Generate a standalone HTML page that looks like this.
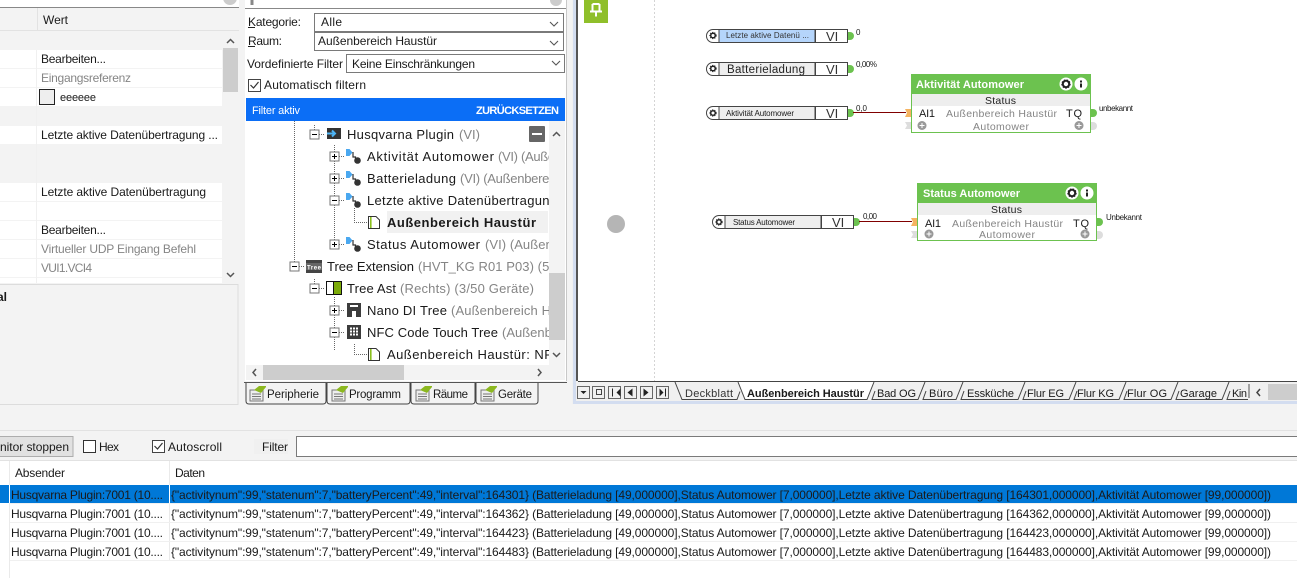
<!DOCTYPE html>
<html><head><meta charset="utf-8"><title>Monitor</title>
<style>
html,body{margin:0;padding:0;width:1297px;height:578px;overflow:hidden;background:#f3f3f3}
svg{display:block;font-family:"Liberation Sans",sans-serif;font-size:12px;fill:#1a1a1a}
.g{fill:#858585}.t{font-size:13px}.s{font-size:8px}
.b{font-weight:bold}
</style></head><body>
<svg width="1297" height="578" viewBox="0 0 1297 578" xmlns="http://www.w3.org/2000/svg">
<defs>
<clipPath id="tc"><rect x="246" y="121" width="303" height="244"/></clipPath>
<clipPath id="lc"><rect x="0" y="285" width="20" height="30"/></clipPath>
<g id="chev"><path d="M-4 -2L0 2L4 -2" fill="none" stroke="#555" stroke-width="1.1"/></g>
<g id="plus"><rect x="-4.5" y="-4.5" width="9" height="9" fill="#fff" stroke="#777"/><path d="M-2.5 0H2.5M0 -2.5V2.5" stroke="#000"/></g>
<g id="minus"><rect x="-4.5" y="-4.5" width="9" height="9" fill="#fff" stroke="#777"/><path d="M-2.5 0H2.5" stroke="#000"/></g>
<g id="vi"><path d="M0 0h3.500l3 3.500-3 3.500H0z" fill="#4aa8f0"/><path d="M7 3v5h2.500v3" fill="none" stroke="#333" stroke-width="1.200"/><circle cx="11.500" cy="11.500" r="3.300" fill="#333"/></g>
<g id="doc"><path d="M.5 .5H8l3.500 3.500V12.500H.5z" fill="#fff" stroke="#333"/><rect x="2" y="1" width="1.600" height="11" fill="#8cc020"/></g>
<g id="tab"><path d="M0 4H13V15H0z" fill="#eee" stroke="#777"/><path d="M2 8h9M2 10.500h9M2 13h9" stroke="#777"/><path d="M4 4L9 0h7v1l-5 6z" fill="#8cb820"/></g>
<g id="gear"><circle r="6.500" fill="#fff"/><circle r="3.200" fill="none" stroke="#222" stroke-width="2"/><circle r="4.200" fill="none" stroke="#222" stroke-width="1" stroke-dasharray="1.500 1.400"/></g>
<g id="info"><circle r="6.500" fill="#fff"/><rect x="-1" y="-3.500" width="2" height="2" fill="#222"/><rect x="-1" y="-.5" width="2" height="4" fill="#222"/></g>
<g id="pl"><circle r="4.500" fill="#999"/><path d="M-2.500 0H2.500M0 -2.500V2.500" stroke="#fff"/></g>
<g id="smg"><circle r="2.300" fill="none" stroke="#222" stroke-width="1.500"/><circle r="3.200" fill="none" stroke="#222" stroke-width=".9" stroke-dasharray="1.200 1.100"/></g>
<path id="outg" d="M0 -4h2a4 4 0 0 1 0 8h-2z" fill="#6cc24f"/>
<path id="outd" d="M0 -4h2a4 4 0 0 1 0 8h-2z" fill="#ddd"/>
</defs>

<rect width="1297" height="578" fill="#f3f3f3"/>

<!-- LEFT PANEL -->
<rect x="0" y="0" width="239" height="7" fill="#fff"/>
<rect x="0" y="7" width="239" height="1" fill="#888"/>
<circle cx="230" cy="-2" r="7" fill="#ccc"/>
<rect x="0" y="30" width="239" height="1" fill="#e2e2e2"/>
<rect x="37" y="8" width="1" height="22" fill="#e2e2e2"/>
<text x="43" y="24" textLength="25">Wert</text>
<rect x="0" y="50" width="222" height="18" fill="#fff"/>
<rect x="0" y="69" width="222" height="18" fill="#fff"/>
<rect x="0" y="88" width="222" height="18" fill="#fff"/>
<rect x="0" y="126" width="222" height="18" fill="#fff"/>
<rect x="0" y="183" width="222" height="18" fill="#fff"/>
<rect x="0" y="202" width="222" height="18" fill="#fff"/>
<rect x="0" y="221" width="222" height="18" fill="#fff"/>
<rect x="0" y="240" width="222" height="18" fill="#fff"/>
<rect x="0" y="259" width="222" height="18" fill="#fff"/>
<rect x="0" y="278" width="222" height="5" fill="#fff"/>
<rect x="36" y="50" width="1" height="233" fill="#f0f0f0"/>
<text x="41" y="63" textLength="65">Bearbeiten...</text>
<text x="41" y="82" textLength="90" class="g">Eingangsreferenz</text>
<rect x="39.500" y="89.500" width="15" height="15" fill="#eee" stroke="#222"/>
<text x="60" y="101" font-size="11" textLength="36">eeeeee</text>
<text x="41" y="139" textLength="177">Letzte aktive Datenübertragung ...</text>
<text x="41" y="196" textLength="165">Letzte aktive Datenübertragung</text>
<text x="41" y="234" textLength="65">Bearbeiten...</text>
<text x="41" y="253" textLength="155" class="g">Virtueller UDP Eingang Befehl</text>
<text x="41" y="272" textLength="51" class="g">VUI1.VCI4</text>
<rect x="223" y="48" width="15" height="44" fill="#cdcdcd"/>
<path d="M227 43l3.500-3.500L234 43" fill="none" stroke="#555" stroke-width="1.500"/>
<path d="M227 273l3.500 3.500L234 273" fill="none" stroke="#555" stroke-width="1.500"/>
<rect x="-1" y="284.500" width="239" height="120" fill="#f3f3f3" stroke="#dcdcdc"/>
<text x="-3" y="301" class="b">al</text>

<!-- CENTER PANEL -->
<rect x="245" y="0" width="322" height="381" fill="#fff"/>
<rect x="245" y="8" width="322" height="1" fill="#888"/>
<circle cx="556" cy="0" r="6" fill="#ccc"/>
<path d="M252 0v5" stroke="#888" stroke-width="3"/>
<rect x="566" y="0" width="1" height="382" fill="#c8c8c8"/>
<text x="248" y="26" textLength="53">Kategorie:</text><path d="M248 27.500h7" stroke="#222"/>
<text x="248" y="45" textLength="34">Raum:</text><path d="M248 46.500h7" stroke="#222"/>
<rect x="314.500" y="13.500" width="249" height="18" fill="#fff" stroke="#7a7a7a"/>
<rect x="314.500" y="32.500" width="249" height="18" fill="#fff" stroke="#7a7a7a"/>
<text x="321" y="26" textLength="21">Alle</text>
<text x="318" y="45" textLength="119">Außenbereich Haustür</text>
<use href="#chev" x="554" y="24"/><use href="#chev" x="554" y="43"/>
<text x="247" y="68" textLength="96">Vordefinierte Filter</text>
<rect x="346.500" y="54.500" width="218" height="18" fill="#fff" stroke="#7a7a7a"/>
<text x="352" y="68" textLength="123">Keine Einschränkungen</text>
<use href="#chev" x="556" y="63"/>
<rect x="248.500" y="79.500" width="12" height="12" fill="#fff" stroke="#444"/>
<path d="M250.500 85l3 3 5-6" fill="none" stroke="#333" stroke-width="1.200"/>
<text x="264" y="89" textLength="102">Automatisch filtern</text>
<rect x="246" y="98" width="319" height="23" fill="#0b6ef6"/>
<text x="252" y="114" font-size="11" style="fill:#fff" textLength="48">Filter aktiv</text>
<text x="476" y="114" font-size="11" class="b" style="fill:#fff" textLength="83">ZURÜCKSETZEN</text>

<!-- tree lines -->
<g stroke="#666" stroke-dasharray="1 1" fill="none">
<path d="M294.500 121V262M314.500 125V130M314.500 279V284M334.500 145V240M334.500 297V350M354.500 208V222.500H367M354.500 344V354.500H367"/>
<path d="M319 134.500h6M339 156.500h6M339 178.500h6M339 200.500h6M339 244.500h6M299 266.500h6M319 288.500h5M339 310.500h6M339 332.500h6"/>
</g>
<use href="#minus" x="314.500" y="134.500"/>
<rect x="327" y="128" width="14" height="11" fill="#333"/><path d="M327 133.500h8M332 130.500l3 3-3 3" fill="none" stroke="#4db4f5" stroke-width="2"/>
<use href="#plus" x="334.500" y="156.500"/><use href="#vi" x="346" y="149"/>
<use href="#plus" x="334.500" y="178.500"/><use href="#vi" x="346" y="171"/>
<use href="#minus" x="334.500" y="200.500"/><use href="#vi" x="346" y="193"/>
<use href="#doc" x="368" y="216"/>
<use href="#plus" x="334.500" y="244.500"/><use href="#vi" x="346" y="237"/>
<use href="#minus" x="294.500" y="266.500"/>
<rect x="306" y="260" width="16" height="13" fill="#444"/><rect x="306" y="263" width="16" height="7" fill="#666"/><text x="307" y="269.500" font-size="6" class="b" style="fill:#fff" textLength="14">Tree</text>
<use href="#minus" x="314.500" y="288.500"/>
<rect x="326.500" y="281.500" width="15" height="13" fill="#fff" stroke="#111"/><rect x="334" y="282" width="7" height="12" fill="#7cab0a"/><path d="M333.500 282v12" stroke="#111"/>
<use href="#plus" x="334.500" y="310.500"/>
<path d="M347 303h14v14h-5v-6h-4v6h-5z" fill="#3c3c3c"/><rect x="350" y="305" width="8" height="2" fill="#fff"/>
<use href="#minus" x="334.500" y="332.500"/>
<rect x="347" y="325" width="14" height="14" fill="#3c3c3c"/><path d="M350 328.500h8M350 331.500h8M350 334.500h8" stroke="#fff" stroke-width="2" stroke-dasharray="2 1"/>
<use href="#doc" x="368" y="348"/>
<rect x="387" y="211" width="161" height="22" fill="#f1f1f1"/>
<g clip-path="url(#tc)" class="t">
<text x="347" y="139" class="t" textLength="107">Husqvarna Plugin</text><text x="459" y="139" class="t g" textLength="21">(VI)</text>
<text x="367" y="161" class="t" textLength="127">Aktivität Automower</text><text x="498" y="161" class="t g" textLength="64">(VI) (Außen</text>
<text x="367" y="183" class="t" textLength="89">Batterieladung</text><text x="460" y="183" class="t g" textLength="92">(VI) (Außenberei</text>
<text x="367" y="205" class="t" textLength="190">Letzte aktive Datenübertragung</text>
<text x="387" y="227" class="t b" textLength="149">Außenbereich Haustür</text>
<text x="367" y="249" class="t" textLength="113">Status Automower</text><text x="485" y="249" class="t g" textLength="75">(VI) (Außenb</text>
<text x="327" y="271" class="t" textLength="87">Tree Extension</text><text x="418" y="271" class="t g" textLength="135">(HVT_KG R01 P03) (5/</text>
<text x="347" y="293" class="t" textLength="49">Tree Ast</text><text x="400" y="293" class="t g" textLength="134">(Rechts) (3/50 Geräte)</text>
<text x="367" y="315" class="t" textLength="80">Nano DI Tree</text><text x="451" y="315" class="t g" textLength="100">(Außenbereich H</text>
<text x="367" y="337" class="t" textLength="131">NFC Code Touch Tree</text><text x="502" y="337" class="t g">(Außenbereich</text>
<text x="387" y="359" class="t" textLength="175">Außenbereich Haustür: NFC</text>
</g>
<rect x="549" y="121" width="16" height="244" fill="#f3f3f3"/>
<rect x="549" y="273" width="16" height="67" fill="#cdcdcd"/>
<path d="M553 136l3.500-3.500L560 136" fill="none" stroke="#555" stroke-width="1.500"/>
<path d="M553 353l3.500 3.500L560 353" fill="none" stroke="#555" stroke-width="1.500"/>
<rect x="529" y="126" width="16" height="16" rx="1" fill="#666"/><rect x="532" y="133" width="10" height="2" fill="#fff"/>
<rect x="246" y="365" width="319" height="15" fill="#f3f3f3"/>
<rect x="263" y="365" width="141" height="15" fill="#cdcdcd"/>
<path d="M256 369l-3 3.500 3 3.500M538 369l3 3.500-3 3.500" fill="none" stroke="#555" stroke-width="1.500"/>

<!-- left tabs -->
<rect x="244" y="381" width="323" height="24" fill="#f3f3f3"/>
<path d="M244 382.500H567" stroke="#555"/>
<path d="M246 383V401q0 3 3 3H323q3 0 3-3V383" fill="#f3f3f3" stroke="#444"/>
<path d="M327 383V401q0 3 3 3H407q3 0 3-3V383" fill="#f3f3f3" stroke="#444"/>
<path d="M411 383V401q0 3 3 3H472q3 0 3-3V383" fill="#f3f3f3" stroke="#444"/>
<path d="M476 383V401q0 3 3 3H535q3 0 3-3V383" fill="#f3f3f3" stroke="#444"/>
<use href="#tab" x="250" y="386"/><use href="#tab" x="332" y="386"/><use href="#tab" x="416" y="386"/><use href="#tab" x="481" y="386"/>
<text x="267" y="398" font-size="11.500" textLength="52">Peripherie</text>
<text x="349" y="398" font-size="11.500" textLength="52">Programm</text>
<text x="433" y="398" font-size="11.500" textLength="35">Räume</text>
<text x="498" y="398" font-size="11.500" textLength="34">Geräte</text>

<!-- DESIGNER -->
<rect x="572" y="0" width="725" height="404" fill="#f0f0f0"/>
<rect x="573" y="0" width="3" height="403" fill="#d3ddf0"/>
<rect x="573" y="401" width="724" height="3" fill="#d3ddf0"/>
<rect x="576" y="0" width="2" height="381" fill="#555"/>
<rect x="578" y="0" width="719" height="381" fill="#fff"/>
<rect x="584" y="0" width="24" height="23" fill="#8fbf2a"/>
<path d="M592.500 4h7M592.500 4v7.500M599.500 4v7.500M590 11.500h12M596 11.500v5" fill="none" stroke="#fff" stroke-width="2"/>
<path d="M654.500 0V381" stroke="#d4d4d4" stroke-dasharray="2 2"/>
<circle cx="616" cy="224" r="9" fill="#b5b5b5"/>

<!-- VI blocks -->
<g>
<path d="M719 29.500h-6a6.500 6.500 0 0 0 0 13h6" fill="#fff" stroke="#444"/>
<rect x="719" y="29.500" width="96" height="13" fill="#b5d5fb" stroke="#444"/>
<rect x="815.500" y="29.500" width="32" height="13" fill="#fff" stroke="#444"/>
<use href="#smg" x="713" y="35.500"/>
<text x="726" y="38" class="s" fill="#333" textLength="83">Letzte aktive Datenü ...</text>
<text x="826" y="41" font-size="13" style="fill:#333">VI</text>
<use href="#outg" x="848" y="36"/>
<text x="856" y="35" class="s" textLength="4">0</text>
</g>
<g>
<path d="M719 62.500h-6a6.500 6.500 0 0 0 0 13h6" fill="#fff" stroke="#444"/>
<rect x="719" y="62.500" width="96" height="13" fill="#eee" stroke="#444"/>
<rect x="815.500" y="62.500" width="32" height="13" fill="#fff" stroke="#444"/>
<use href="#smg" x="713" y="68.500"/>
<text x="727" y="73" font-size="11.500" textLength="78" style="fill:#222">Batterieladung</text>
<text x="826" y="74" font-size="13" style="fill:#333">VI</text>
<use href="#outg" x="848" y="69"/>
<text x="856" y="67" class="s" textLength="21">0,00%</text>
</g>
<g>
<path d="M719 106.500h-6a6.500 6.500 0 0 0 0 13h6" fill="#fff" stroke="#444"/>
<rect x="719" y="106.500" width="96" height="13" fill="#eee" stroke="#444"/>
<rect x="815.500" y="106.500" width="32" height="13" fill="#fff" stroke="#444"/>
<use href="#smg" x="713" y="113"/>
<text x="726" y="116" class="s" textLength="68">Aktivität Automower</text>
<text x="826" y="118" font-size="13" style="fill:#333">VI</text>
<use href="#outg" x="848" y="113"/>
<text x="856" y="111" class="s" textLength="11">0,0</text>
<path d="M853 112.500H906" stroke="#800000"/>
</g>
<g>
<path d="M725 215.500h-6a6.500 6.500 0 0 0 0 13h6" fill="#fff" stroke="#444"/>
<rect x="725" y="215.500" width="96" height="13" fill="#eee" stroke="#444"/>
<rect x="821.500" y="215.500" width="32" height="13" fill="#fff" stroke="#444"/>
<use href="#smg" x="719" y="222"/>
<text x="733" y="225" class="s" textLength="62">Status Automower</text>
<text x="832" y="227" font-size="13" style="fill:#333">VI</text>
<use href="#outg" x="854" y="222"/>
<text x="863" y="219" class="s" textLength="14">0,00</text>
<path d="M859 221.500H912" stroke="#800000"/>
</g>

<!-- Function block 1 -->
<path d="M905 109h6v8h-6l2-4z" fill="#f5b461"/>
<path d="M905 122h6v7h-6l2-3.500z" fill="#ddd"/>
<rect x="911.500" y="74.500" width="179" height="58" fill="#fff" stroke="#6cc24f"/>
<rect x="911" y="74" width="180" height="20" fill="#6cc24f"/>
<rect x="912" y="94" width="178" height="12" fill="#eee"/>
<text x="916" y="88" class="b" font-size="11" style="fill:#fff" textLength="108">Aktivität Automower</text>
<use href="#gear" x="1066" y="84"/><use href="#info" x="1081" y="84"/>
<text x="985" y="104" font-size="10.500" textLength="31" fill="#222">Status</text>
<text x="919" y="117" font-size="11" textLength="16">AI1</text>
<text x="946" y="117" font-size="10.500" class="g" textLength="111">Außenbereich Haustür</text>
<text x="1066" y="117" font-size="11" textLength="16">TQ</text>
<text x="973" y="130" font-size="10.500" class="g" textLength="56">Automower</text>
<use href="#pl" x="922" y="125.500"/><use href="#pl" x="1079" y="125.500"/>
<use href="#outg" x="1091" y="113"/>
<use href="#outd" x="1091" y="126"/>
<text x="1099" y="111" class="s" textLength="34">unbekannt</text>

<!-- Function block 2 -->
<path d="M911 218h6v8h-6l2-4z" fill="#f5b461"/>
<path d="M911 231h6v7h-6l2-3.500z" fill="#ddd"/>
<rect x="917.500" y="183.500" width="179" height="57" fill="#fff" stroke="#6cc24f"/>
<rect x="917" y="183" width="180" height="20" fill="#6cc24f"/>
<rect x="918" y="203" width="178" height="12" fill="#eee"/>
<text x="923" y="197" class="b" font-size="11" style="fill:#fff" textLength="97">Status Automower</text>
<use href="#gear" x="1072" y="193"/><use href="#info" x="1087" y="193"/>
<text x="991" y="213" font-size="10.500" textLength="31" fill="#222">Status</text>
<text x="925" y="227" font-size="11" textLength="16">AI1</text>
<text x="952" y="227" font-size="10.500" class="g" textLength="111">Außenbereich Haustür</text>
<text x="1073" y="227" font-size="11" textLength="16">TQ</text>
<text x="979" y="238" font-size="10.500" class="g" textLength="56">Automower</text>
<use href="#pl" x="929" y="234"/><use href="#pl" x="1085" y="234"/>
<use href="#outg" x="1097" y="222"/>
<use href="#outd" x="1097" y="235"/>
<text x="1106" y="220" class="s" textLength="36">Unbekannt</text>

<!-- Designer tab bar -->
<rect x="578" y="381" width="719" height="20" fill="#f0f0f0"/>
<path d="M578 381.500H1297" stroke="#444"/>
<g fill="#f0f0f0" stroke="#666">
<rect x="577.500" y="386.500" width="12" height="12"/><rect x="592.500" y="386.500" width="12" height="12"/><rect x="608.500" y="386.500" width="12" height="12"/><rect x="624.500" y="386.500" width="12" height="12"/><rect x="640.500" y="386.500" width="12" height="12"/><rect x="656.500" y="386.500" width="12" height="12"/>
</g>
<path d="M580.500 391h6l-3 3zM627.500 392.500l5-4v8zM648.500 392.500l-5-4v8zM616.500 392.500l4-4v8zM659.500 388.500l4 4-4 4z" fill="#222"/>
<path d="M612.500 388.500v8M665.500 388.500v8" stroke="#222"/>
<rect x="596.500" y="389.500" width="5" height="5" fill="none" stroke="#444"/>
<path d="M738 382L745 399.500H867L874 382L737 382z" fill="#fff"/>
<path d="M675 382l7 17.500H737l3-8M738 382l7 17.500H867l7-17.500M875 391l-3 8.500H918L925 382M926 391l-3 8.500H956L963 382M964 391l-3 8.500H1018L1025 382M1026 391l-3 8.500H1069L1076 382M1077 391l-3 8.500H1119L1126 382M1127 391l-3 8.500H1171L1178 382M1179 391l-3 8.500H1222L1229 382M1230 391l-3 8.500H1248" fill="none" stroke="#444"/>
<g font-size="11">
<text x="685" y="397" textLength="48" fill="#333">Deckblatt</text>
<text x="747" y="397" textLength="117" class="b">Außenbereich Haustür</text>
<text x="877" y="397" textLength="39">Bad OG</text>
<text x="929" y="397" textLength="24">Büro</text>
<text x="967" y="397" textLength="47">Essküche</text>
<text x="1027" y="397" textLength="37">Flur EG</text>
<text x="1077" y="397" textLength="37">Flur KG</text>
<text x="1127" y="397" textLength="40">Flur OG</text>
<text x="1180" y="397" textLength="37">Garage</text>
<text x="1232" y="397" textLength="15">Kin</text>
</g>
<rect x="1249" y="382" width="48" height="19" fill="#f0f0f0"/>
<rect x="1268" y="384" width="29" height="16" fill="#cdcdcd"/>
<path d="M1249 384v14" stroke="#555"/>
<path d="M1260 389l-3 3.500 3 3.500" fill="none" stroke="#444" stroke-width="1.500"/>

<!-- MONITOR -->
<rect x="0" y="430" width="1297" height="1" fill="#e2e2e2"/>
<rect x="-2" y="436.500" width="75" height="20" fill="#e1e1e1" stroke="#adadad"/>
<text x="0" y="451" textLength="69">nitor stoppen</text>
<rect x="83.500" y="440.500" width="12" height="12" fill="#fff" stroke="#333"/>
<text x="99" y="451" textLength="20">Hex</text>
<rect x="152.500" y="440.500" width="12" height="12" fill="#fff" stroke="#444"/>
<path d="M154.500 446l3 3 5-6" fill="none" stroke="#333" stroke-width="1.200"/>
<text x="168" y="451" textLength="54">Autoscroll</text>
<rect x="254" y="439" width="34" height="15" fill="#f0f0f0"/>
<text x="262" y="451" textLength="26">Filter</text>
<rect x="296.500" y="436.500" width="1002" height="20" fill="#fff" stroke="#7a7a7a"/>
<rect x="0" y="460" width="1297" height="118" fill="#fff"/>
<rect x="0" y="460" width="1297" height="1" fill="#e2e2e2"/>
<rect x="9" y="461" width="1" height="117" fill="#eaeaea"/>
<rect x="169" y="461" width="1" height="100" fill="#eaeaea"/>
<text x="15" y="477" textLength="50">Absender</text>
<text x="175" y="477" textLength="30">Daten</text>
<rect x="0" y="485" width="1297" height="18" fill="#0078d7"/>
<rect x="10" y="503" width="1287" height="1" fill="#f0f0f0"/>
<rect x="10" y="522" width="1287" height="1" fill="#f0f0f0"/>
<rect x="10" y="541" width="1287" height="1" fill="#f0f0f0"/>
<rect x="10" y="560" width="1287" height="1" fill="#f0f0f0"/>
<rect x="9" y="485" width="1" height="18" fill="#fff"/><rect x="169" y="485" width="1" height="18" fill="#fff"/>
<text x="11" y="499" textLength="152">Husqvarna Plugin:7001 (10....</text>
<text x="11" y="518" textLength="152">Husqvarna Plugin:7001 (10....</text>
<text x="11" y="537" textLength="152">Husqvarna Plugin:7001 (10....</text>
<text x="11" y="556" textLength="152">Husqvarna Plugin:7001 (10....</text>
<text x="171" y="499" textLength="1100">{"activitynum":99,"statenum":7,"batteryPercent":49,"interval":164301} (Batterieladung [49,000000],Status Automower [7,000000],Letzte aktive Datenübertragung [164301,000000],Aktivität Automower [99,000000])</text>
<text x="171" y="518" textLength="1100">{"activitynum":99,"statenum":7,"batteryPercent":49,"interval":164362} (Batterieladung [49,000000],Status Automower [7,000000],Letzte aktive Datenübertragung [164362,000000],Aktivität Automower [99,000000])</text>
<text x="171" y="537" textLength="1100">{"activitynum":99,"statenum":7,"batteryPercent":49,"interval":164423} (Batterieladung [49,000000],Status Automower [7,000000],Letzte aktive Datenübertragung [164423,000000],Aktivität Automower [99,000000])</text>
<text x="171" y="556" textLength="1100">{"activitynum":99,"statenum":7,"batteryPercent":49,"interval":164483} (Batterieladung [49,000000],Status Automower [7,000000],Letzte aktive Datenübertragung [164483,000000],Aktivität Automower [99,000000])</text>
</svg>
</body></html>
